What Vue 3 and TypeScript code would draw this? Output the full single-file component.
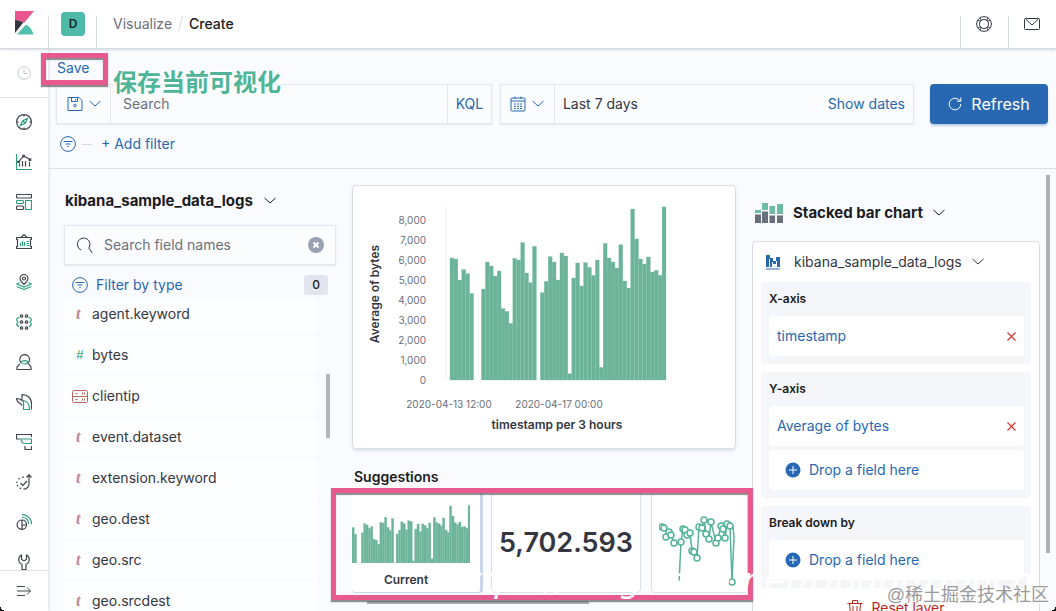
<script setup lang="ts">
interface Stroke { d: string; accent?: boolean }
interface NavItem { label: string; strokes: Stroke[] }
interface Field { name: string; kind: 'text' | 'number' | 'ip' }
interface Slot { text: string; filled: boolean }
interface Dimension { label: string; slots: Slot[] }

const navItems: NavItem[] = [
  { label: 'Discover', strokes: [
    { d: 'M8 .6a7.4 7.4 0 1 0 0 14.8A7.4 7.4 0 0 0 8 .6zM8 .6v2M8 13.4v2M.6 8h2M13.4 8h2' },
    { d: 'M11.5 4.5 9.2 9.2 4.5 11.5 6.8 6.8zM7 7l2 2', accent: true },
  ] },
  { label: 'Visualize', strokes: [
    { d: 'M.5 0v15.5H16', accent: true },
    { d: 'M3.5 12.5V9.5M6.5 12.5V7M9.5 12.5V7M13.5 12.5V8M3 7.3 7 2.8M8.5 2.5 13 5M1.8 7.3h1.5v1H1.8zM6.8 1.3h1.5v1.5H6.8zM13.2 4.8h1.5v1.5h-1.5z' },
  ] },
  { label: 'Dashboard', strokes: [
    { d: 'M1.5.5h13a1 1 0 0 1 1 1v1.5a1 1 0 0 1-1 1h-13a1 1 0 0 1-1-1V1.5a1 1 0 0 1 1-1zM1.5 12h5a1 1 0 0 1 1 1v1.5a1 1 0 0 1-1 1h-5a1 1 0 0 1-1-1V13a1 1 0 0 1 1-1z' },
    { d: 'M9.5 6.5h6v9h-6zM1.5 6.5h5a1 1 0 0 1 1 1v1a1 1 0 0 1-1 1h-5a1 1 0 0 1-1-1v-1a1 1 0 0 1 1-1z', accent: true },
  ] },
  { label: 'Canvas', strokes: [
    { d: 'M.5 3.5h15v2h-1v7h1v2H.5v-2h1v-7h-1zM5 3.5l3-3 3 3' },
    { d: 'M4.5 12V9M6.5 12V7M8.5 12V8M10.5 7.5H13M10.5 9.5H13M10.5 11.5H13', accent: true },
  ] },
  { label: 'Maps', strokes: [
    { d: 'M8 10.5C5.5 8 4 6.5 4 4.5a4 4 0 0 1 8 0c0 2-1.5 3.5-4 6zM8 3a1.5 1.5 0 1 0 0 3 1.5 1.5 0 0 0 0-3z' },
    { d: 'M3.5 8.5.7 10 8 13l7.3-3-2.8-1.5M.7 12.5 8 15.5l7.3-3', accent: true },
  ] },
  { label: 'Machine Learning', strokes: [
    { d: 'M3 3 .8 5v1.5L2 8 .8 9.5V11L3 13M13 3l2.2 2v1.5L14 8l1.2 1.500V11L13 13', accent: true },
    { d: 'M5.500.800a1.200 1.200 0 1 0 .1 0zM10.500.800a1.200 1.200 0 1 0 .1 0zM5.500 6.800a1.200 1.200 0 1 0 .1 0zM10.500 6.800a1.200 1.200 0 1 0 .1 0zM5.500 12.800a1.200 1.200 0 1 0 .1 0zM10.500 12.800a1.200 1.200 0 1 0 .1 0z' },
  ] },
  { label: 'Metrics', strokes: [
    { d: 'M5 9C3.5 7.5 3.5 4 5 2.2 7 0 10.5 0 12.5 2.5c1.5 2 1.3 5-.5 6.5l3 4v2.5H1V13l3-3' },
    { d: 'M5 8.5C6.5 6 11 6 12.2 8.5 10.5 10.5 6.5 10.5 5 8.5z', accent: true },
  ] },
  { label: 'Logs', strokes: [
    { d: 'M6 11.5C5 8.5.5 9 .5 4.5c2.5 0 4 .5 5.5 2V.6c5.5 0 9.5 3.4 9.5 9v6' },
    { d: 'M7.5 6.5v9h6c0-4-2-8-6-9z', accent: true },
  ] },
  { label: 'APM', strokes: [
    { d: 'M4 5H.5V.5h15V3M9 12v3.5h6.5V12' },
    { d: 'M5 5h10.5v4.5H9C6.5 9.5 5 8 5 5z', accent: true },
  ] },
  { label: 'Uptime', strokes: [
    { d: 'M13 1v9c0 3-2.5 5.2-5.5 5.2M10.5 3.5 13 .8l2.5 2.7M6 3.5l2-.5M2.5 5.2l1.2-1M.8 9l.2-1.5M5 14.7l-1.5-.8M2 12.5 1.2 11' },
    { d: 'M4.5 9 7 11.5 11 7' },
  ] },
  { label: 'SIEM', strokes: [
    { d: 'M6 6a4.7 4.7 0 1 0 4.5 5H6zM6 6v9.5M6 11h4.5C10.5 8 9 6 6 6' },
    { d: 'M6 .7c5.5 0 9.5 4 9.5 9.5M6 3.5c4 0 6.5 2.5 6.5 6.5', accent: true },
  ] },
  { label: 'Dev Tools', strokes: [
    { d: 'M6 15.5v-5C1.5 8.5 2 2.5 5.5 1v4l1.5 1.5h2L10.5 5V1c3.5 1.5 4 7.5-.5 9.5v5z' },
  ] },
]

const fields: Field[] = [
  { name: 'agent.keyword', kind: 'text' },
  { name: 'bytes', kind: 'number' },
  { name: 'clientip', kind: 'ip' },
  { name: 'event.dataset', kind: 'text' },
  { name: 'extension.keyword', kind: 'text' },
  { name: 'geo.dest', kind: 'text' },
  { name: 'geo.src', kind: 'text' },
  { name: 'geo.srcdest', kind: 'text' },
]

const dimensions: Dimension[] = [
  { label: 'X-axis', slots: [{ text: 'timestamp', filled: true }] },
  { label: 'Y-axis', slots: [{ text: 'Average of bytes', filled: true }, { text: 'Drop a field here', filled: false }] },
  { label: 'Break down by', slots: [{ text: 'Drop a field here', filled: false }] },
]

const values: number[] = [
  6100, 6050, 5000, 5517, 5317, 4333, 0, 0, 4550, 5900, 5700, 5200, 5450, 3567, 3433, 2833,
  6083, 6000, 6867, 5350, 4867, 6683, 0, 4367, 4933, 6167, 5900, 5000, 6350, 6200, 317, 5100,
  5850, 4700, 5867, 5633, 5233, 6000, 633, 6833, 6100, 5900, 5600, 6767, 4950, 4600, 8550,
  7050, 6050, 5800, 6150, 5400, 5483, 5233, 8650,
]
const ticks = [8000, 7000, 6000, 5000, 4000, 3000, 2000, 1000, 0]

const pitch = 216 / values.length
const bars = values.map((v, i) => ({ x: 97 + i * pitch, h: v / 50 }))
const miniBars = values.slice(4).map((v, i) => ({ x: i * 2.32, h: v / 150 }))

const points: [number, number][] = [
  [3, 14], [5, 15], [10, 19], [7, 24], [12, 22], [15, 30],
  [22, 29], [24, 16], [26, 17], [28, 22], [31, 20], [33, 38], [35, 39], [38, 45],
  [40, 14], [43, 15], [45, 7], [47, 21], [50, 26], [52, 9], [57, 30], [59, 25],
  [62, 13], [64, 16], [66, 25], [68, 11], [71, 13], [73, 69],
]
const firstLine = points.slice(0, 6).map(p => p.join(',')).join(' ')
const secondLine = '20,70 ' + points.slice(6).map(p => p.join(',')).join(' ') + ' 75,24 74,14'
</script>

<template>
  <div class="app">
    <header class="header">
      <a href="#" class="logo" aria-label="Kibana home">
        <svg width="19" height="24" viewBox="0 0 19 24">
          <path d="M0 0h19L9 12C6.500 10 3.500 9 0 9z" fill="#e8558f" />
          <path d="M0 9c3.500 0 6 1 8.300 2.500L0 22z" fill="#343741" />
          <path d="M11 13.500c4 2.500 6.500 5.500 7.500 10H2z" fill="#4dbfaa" />
        </svg>
      </a>
      <div class="space"><button class="space-badge" aria-label="Default space">D</button></div>
      <nav class="crumbs" aria-label="Breadcrumb">
        <a href="#">Visualize</a><span class="slash" aria-hidden="true"></span><strong>Create</strong>
      </nav>
      <button class="header-btn" aria-label="Help">
        <svg width="16" height="16" viewBox="0 0 16 16" class="line">
          <circle cx="8" cy="8" r="7.400" /><circle cx="8" cy="8" r="4.500" />
          <path d="M2.200 4.200 5 5.500M4.200 2.200 5.500 5M11.800 2.200 10.500 5M13.800 4.200 11 5.500M2.200 11.800 5 10.500M4.200 13.800 5.500 11M11.800 13.800 10.500 11M13.800 11.800 11 10.500" />
        </svg>
      </button>
      <button class="header-btn" aria-label="News">
        <svg width="16" height="16" viewBox="0 0 16 16" class="line">
          <rect x=".5" y="2.500" width="15" height="11" rx="1" /><path d="m1.500 3 6.500 6L14.500 3" />
        </svg>
      </button>
    </header>

    <div class="shell">
      <nav class="sidebar" aria-label="Primary">
        <a href="#" class="recent" aria-label="Recently viewed">
          <svg width="14" height="14" viewBox="0 0 14 14" class="faint"><circle cx="7" cy="7" r="6.300" /><path d="M7 3v4.500h4" /></svg>
        </a>
        <div class="nav-list">
          <a v-for="item in navItems" :key="item.label" href="#" class="nav-link" :aria-label="item.label">
            <svg width="16" height="16" viewBox="0 0 16 16" class="line">
              <path v-for="(s, i) in item.strokes" :key="i" :d="s.d" :class="{ accent: s.accent }" />
            </svg>
          </a>
        </div>
        <button class="collapse" aria-label="Expand navigation">
          <svg width="16" height="12" viewBox="0 0 16 12" class="line"><path d="M1 1.500h8M1 6h13.500M1 10.500h8M11 2.500 14.500 6 11 9.500" /></svg>
        </button>
      </nav>

      <main class="main">
        <section class="top">
          <div class="menu"><a href="#">Save</a></div>
          <div class="query-row">
            <div class="query box">
              <button class="icon-pair" aria-label="Saved queries">
                <svg width="16" height="16" viewBox="0 0 16 16" class="line"><path d="M1 1.500h11l3 3v10H1zM4.500 1.500v4h6v-4M8.500 3v1.500" /><circle cx="8" cy="9.500" r="1.300" /></svg>
                <svg width="12" height="8" viewBox="0 0 12 8" class="line"><path d="m.500 1 5.500 5 5.500-5" /></svg>
              </button>
              <input type="text" placeholder="Search" aria-label="Search" class="query-input">
              <button class="kql">KQL</button>
            </div>
            <div class="dates box">
              <button class="icon-pair" aria-label="Quick date select">
                <svg width="16" height="16" viewBox="0 0 16 16" class="line">
                  <path d="M2 2h12a1 1 0 0 1 1 1v11a1 1 0 0 1-1 1H2a1 1 0 0 1-1-1V3a1 1 0 0 1 1-1zM1 5h14M5 .500V3M11 .500V3" />
                  <path d="M4 8h9M4 10.300h9M4 12.600h9" stroke-dasharray="2 1" />
                </svg>
                <svg width="12" height="8" viewBox="0 0 12 8" class="line"><path d="m.500 1 5.500 5 5.500-5" /></svg>
              </button>
              <span class="range">Last 7 days</span>
              <button class="show-dates">Show dates</button>
            </div>
            <button class="refresh">
              <svg width="14" height="14" viewBox="0 0 14 14" class="line"><path d="M12.800 7a5.800 5.800 0 1 1-2.300-4.600L12.500 4M12.800.500V4.200H9" /></svg>
              Refresh
            </button>
          </div>
          <div class="filters">
            <button aria-label="Filter options" class="plain">
              <svg width="16" height="16" viewBox="0 0 16 16" class="line"><circle cx="8" cy="8" r="7.400" /><path d="M3.500 5.500h9M5.500 8h5M7.300 10.500h1.400" /></svg>
            </button>
            <span class="dash"></span>
            <button class="plain">+ Add filter</button>
          </div>
          <div class="mark save-mark" aria-hidden="true"></div>
          <p class="save-note">保存当前可视化</p>
        </section>

        <div class="work">
          <section class="fields">
            <button class="title">
              kibana_sample_data_logs
              <svg width="12" height="8" viewBox="0 0 12 8" class="line"><path d="m.500 1 5.500 5 5.500-5" /></svg>
            </button>
            <div class="field-search box">
              <svg width="17" height="17" viewBox="0 0 17 17" class="line"><path d="M5 13A6.300 6.300 0 1 1 12.800 11L16.300 16" /></svg>
              <input type="text" placeholder="Search field names" aria-label="Search field names">
              <button class="clear" aria-label="Clear">
                <svg width="16" height="16" viewBox="0 0 16 16"><circle cx="8" cy="8" r="8" /><path d="m5.500 5.500 5 5M10.500 5.500l-5 5" /></svg>
              </button>
            </div>
            <button class="type-filter">
              <svg width="16" height="16" viewBox="0 0 16 16" class="line"><circle cx="8" cy="8" r="7.400" /><path d="M3.500 5.500h9M5.500 8h5M7.300 10.500h1.400" /></svg>
              <span>Filter by type</span>
              <span class="count">0</span>
            </button>
            <div class="list-wrap">
              <ul class="list">
                <li v-for="f in fields" :key="f.name">
                  <span class="kind" :class="f.kind">
                    <svg v-if="f.kind === 'ip'" width="16" height="13" viewBox="0 0 16 13" class="line">
                      <path d="M1.500.500h13a1 1 0 0 1 1 1v10a1 1 0 0 1-1 1h-13a1 1 0 0 1-1-1v-10a1 1 0 0 1 1-1zM.500 6.500h15M10.500 2.500v2M12.500 2.500v2M10.500 8.500v2M12.500 8.500v2M3.500 3.500h2M3.500 9.500h2" />
                    </svg>
                    <template v-else>{{ f.kind === 'text' ? 't' : '#' }}</template>
                  </span>
                  {{ f.name }}
                </li>
              </ul>
              <span class="list-thumb"></span>
            </div>
          </section>

          <section class="canvas">
            <div class="chart-card">
              <svg class="chart" viewBox="0 0 382 262" role="img" aria-label="Average of bytes by timestamp">
                <line x1="93" x2="93" y1="21" y2="194" class="axis" />
                <text v-for="t in ticks" :key="t" x="73" :y="198 - t / 50" text-anchor="end" class="tick">{{ t.toLocaleString('en-US') }}</text>
                <rect v-for="(b, i) in bars" :key="i" :x="b.x" :y="194 - b.h" :width="pitch" :height="b.h" class="bar" />
                <text x="96" y="222" text-anchor="middle" class="tick">2020-04-13 12:00</text>
                <text x="206" y="222" text-anchor="middle" class="tick">2020-04-17 00:00</text>
                <text x="204" y="243" text-anchor="middle" class="axis-title">timestamp per 3 hours</text>
                <text transform="translate(26 108) rotate(-90)" text-anchor="middle" class="axis-title">Average of bytes</text>
              </svg>
            </div>
            <h2>Suggestions</h2>
            <div class="suggestions">
              <button class="card current">
                <svg width="118" height="58" viewBox="0 0 118 58">
                  <rect v-for="(b, i) in miniBars" :key="i" :x="b.x" :y="58 - b.h" width="2.320" :height="b.h" class="bar" />
                </svg>
                <span>Current</span>
              </button>
              <button class="card metric">5,702.593</button>
              <button class="card trend" aria-label="Line chart">
                <svg width="80" height="74" viewBox="0 0 80 74">
                  <polyline :points="firstLine" /><polyline :points="secondLine" />
                  <circle v-for="(p, i) in points" :key="i" :cx="p[0]" :cy="p[1]" r="3" />
                </svg>
              </button>
              <div class="mark suggest-mark" aria-hidden="true"></div>
            </div>
            <span class="h-thumb"></span>
          </section>

          <section class="config">
            <button class="chart-type">
              <svg width="28" height="20" viewBox="0 0 28 20">
                <path d="M0 7h6v3H0zM7 0h6v7H7zM14.500 3h5.500v8h-5.500zM22 1h6v10h-6z" fill="#6dbba0" />
                <path d="M0 11.500h6V20H0zM7 8.500h6V20H7zM14.500 12.500h5.500V20h-5.500zM22 12.500h6V20h-6z" fill="#69707d" />
              </svg>
              <span>Stacked bar chart</span>
              <svg width="12" height="8" viewBox="0 0 12 8" class="line"><path d="m.500 1 5.500 5 5.500-5" /></svg>
            </button>
            <div class="layer">
              <button class="layer-head">
                <svg width="16" height="16" viewBox="0 0 16 16"><path d="M1 1h4v3h3v3h3V3h4v10h-3V7h-1v3H8V8H7v5H5V5H4v8H1zM1 14.500h14v1H1z" fill="#2868b2" /></svg>
                <span>kibana_sample_data_logs</span>
                <svg width="12" height="8" viewBox="0 0 12 8" class="line"><path d="m.500 1 5.500 5 5.500-5" /></svg>
              </button>
              <div v-for="d in dimensions" :key="d.label" class="dimension">
                <h3>{{ d.label }}</h3>
                <div v-for="s in d.slots" :key="s.text" class="slot">
                  <button v-if="s.filled" class="plain">{{ s.text }}</button>
                  <button v-else class="plain drop">
                    <svg width="16" height="16" viewBox="0 0 16 16"><circle cx="8" cy="8" r="7.500" fill="#2868b2" /><path d="M8 4v8M4 8h8" stroke="#fff" /></svg>
                    {{ s.text }}
                  </button>
                  <button v-if="s.filled" class="remove" :aria-label="`Remove ${s.text}`">
                    <svg width="9" height="9" viewBox="0 0 9 9"><path d="M.5.5l8 8M8.500.5l-8 8" /></svg>
                  </button>
                </div>
              </div>
              <button class="reset">
                <svg width="16" height="16" viewBox="0 0 16 16" class="line"><path d="M.500 3.500h15M5.500 3.500v-3h5v3M2.500 3.500l1 12h9l1-12M6 6v7M10 6v7" /></svg>
                Reset layer
              </button>
            </div>
            <span class="v-thumb"></span>
          </section>
        </div>
      </main>
    </div>

    <span class="url-mark">https://blog.csdn.net/UbuntuTouch</span>
    <span class="source-mark">@稀土掘金技术社区</span>
    <span class="corner left"></span><span class="corner right"></span>
  </div>
</template>

<style>
body { margin: 0; }
</style>

<style scoped>
* { box-sizing: border-box; }
.app {
  position: relative; display: flex; flex-direction: column; height: 100vh; overflow: hidden;
  background: #fafbfe; color: #343741;
  font: 14px/20px Inter, "Noto Sans CJK SC", sans-serif;
}
button, input { font: inherit; color: inherit; background: none; border: 0; padding: 0; margin: 0; }
button { cursor: pointer; }
input { min-width: 0; outline: 0; }
input::placeholder { color: #69707d; opacity: 1; }
a { color: #2868b2; text-decoration: none; }
svg { flex: none; display: block; }
.line { fill: none; stroke: currentColor; stroke-width: 1; }
.faint { fill: none; stroke: #c2c6cd; }
.accent { stroke: #2f9d80; }
.box { border: 1px solid #e3e6ec; box-shadow: 0 1px 2px #98a2b333; background: #fbfcfd; }
.plain { color: #2868b2; }

.header {
  position: relative; z-index: 2; flex: none; display: flex; align-items: flex-end; height: 49px;
  background: #fff; border-bottom: 1px solid #d5dae2; box-shadow: 0 1px 2px #98a2b366;
}
.logo { width: 48px; height: 37px; padding-left: 15px; }
.space { width: 49px; height: 32px; border: solid #d9dde4; border-width: 0 1px; }
.space-badge { display: block; width: 24px; height: 24px; margin: -4px 0 0 12px; border-radius: 4px; background: #4dbba8; color: #1a1c21; font-size: 12px; font-weight: 600; }
.crumbs { flex: 1; display: flex; align-items: center; height: 48px; padding-left: 16px; }
.crumbs a { color: #69707d; }
.crumbs strong { font-weight: 500; color: #1a1c21; }
.slash { width: 1px; height: 16px; margin: 0 8px; background: #d3dae6; transform: rotate(15deg); }
.header-btn { width: 48px; height: 32px; padding: 0 0 16px 15px; border-left: 1px solid #d9dde4; }

.shell { flex: 1; display: flex; min-height: 0; }
.sidebar { position: relative; z-index: 1; flex: none; display: flex; flex-direction: column; width: 48px; background: #fff; box-shadow: 1px 0 3px #98a2b34d; }
.recent { flex: none; display: flex; align-items: center; justify-content: center; height: 49px; border-bottom: 1px solid #e0e3e9; }
.nav-list { flex: 1; min-height: 0; overflow: hidden; padding-top: 4px; }
.nav-link { display: flex; align-items: center; justify-content: center; height: 40px; color: #43464f; }
.nav-link svg { stroke-width: 1.2; }
.collapse { flex: none; display: flex; align-items: center; justify-content: center; height: 41px; border-top: 1px solid #e0e3e9; background: #fff; color: #43464f; }

.main { flex: 1; min-width: 0; display: flex; flex-direction: column; }
.top { position: relative; z-index: 2; flex: none; padding: 9px 8px 14px; border-bottom: 1px solid #dce0e7; }
.menu { padding-left: 1px; height: 26px; }
.query-row { display: flex; }
.query { flex: 436 1 0; display: flex; height: 40px; }
.dates { flex: 414 1 0; display: flex; align-items: center; height: 40px; margin-left: 8px; }
.icon-pair { flex: none; display: flex; align-items: center; justify-content: center; gap: 6px; width: 54px; height: 38px; border-right: 1px solid #e3e6ec; color: #2868b2; }
.query-input { flex: 1; padding-left: 12px; }
.kql { width: 44px; border-left: 1px solid #e3e6ec; color: #2868b2; }
.range { flex: 1; padding-left: 8px; }
.show-dates { padding-right: 8px; color: #2868b2; }
.refresh { display: flex; align-items: center; justify-content: center; gap: 9px; width: 118px; height: 40px; margin-left: 16px; border-radius: 4px; background: #2868b2; color: #fff; font-size: 16px; box-shadow: 0 2px 2px #2868b24d; }
.filters { display: flex; align-items: center; padding: 10px 4px 0; }
.dash { width: 10px; height: 1px; margin: 0 9px 0 6px; background: #d3dae6; }
.mark { position: absolute; pointer-events: none; border: 5px solid #e65a8d; box-shadow: 0 2px 1px #555a, inset 0 2px 1px #555a; }
.save-mark { left: -7px; top: 4px; width: 67px; height: 32px; }
.save-note { position: absolute; left: 65px; top: 14px; margin: 0; font: bold 24px/36px "Noto Sans CJK SC", sans-serif; color: #4fb598; text-shadow: -2px 0 1px #fff, 2px 0 1px #fff, 0 2px 1px #fff, 0 -2px 1px #fff; }

.work { flex: 1; min-height: 0; display: grid; grid-template: minmax(0, 1fr) / minmax(0, 304fr) minmax(0, 384fr) minmax(0, 320fr); }
.fields { display: flex; flex-direction: column; min-height: 0; padding: 20px 16px 0; }
.title { flex: none; display: flex; align-items: center; gap: 11px; height: 24px; padding-left: 1px; font-size: 15px; font-weight: 700; color: #1a1c21; }
.field-search { flex: none; display: flex; align-items: center; gap: 11px; height: 40px; margin-top: 12px; padding: 0 11px; }
.field-search input { flex: 1; }
.clear circle { fill: #98a2b3; }
.clear path { stroke: #fff; stroke-width: 2; }
.type-filter { flex: none; display: flex; align-items: center; gap: 8px; height: 28px; margin-top: 6px; padding: 0 8px; color: #2868b2; }
.count { width: 24px; margin-left: auto; border-radius: 3px; background: #e0e5ee; color: #1a1c21; font-size: 12px; font-weight: 500; }
.list-wrap { display: flex; min-height: 0; overflow: hidden; }
.list { flex: 1; list-style: none; margin: 0; padding: 0; }
.list li { display: flex; align-items: center; height: 38px; margin-bottom: 3px; padding-left: 8px; background: #fdfeff; }
.list li:first-child { height: 34px; padding-bottom: 4px; }
.kind { width: 20px; padding-left: 4px; font: italic bold 16px/20px "Liberation Serif", serif; color: #c08497; }
.kind.number { color: #54b399; font-family: "Liberation Sans", sans-serif; font-size: 13px; }
.kind.ip { padding: 0; color: #b9675b; }
.list-thumb { width: 4px; height: 64px; margin: 75px 6px 0 9px; background: #b3b5b9; }

.canvas { position: relative; z-index: 1; padding-top: 16px; }
.chart-card { border: 1px solid #d9dde5; border-radius: 4px; background: #fff; box-shadow: 0 2px 3px #98a2b340; }
.chart { width: 100%; }
.bar { fill: #6db39a; stroke: #7fc2ab; stroke-width: 0.3; }
.axis { stroke: #eef0f3; }
.tick { font-size: 10px; fill: #69707d; }
.axis-title { font-size: 12px; font-weight: 600; fill: #343741; }
h2 { margin: 18px 0 0 2px; font-size: 14px; line-height: 20px; font-weight: 600; color: #1a1c21; }
.suggestions { position: relative; display: flex; gap: 8px; height: 108px; padding-top: 4px; }
.card { flex: none; height: 102px; border: 1px solid #dce0e7; border-radius: 4px; background: #fff; }
.current { display: flex; flex-direction: column; align-items: flex-start; justify-content: flex-start; width: 131px; padding-top: 14px; border-color: transparent #c8d6eb #c8d6eb transparent; border-width: 0 3px 1px 0; font-size: 12px; font-weight: 600; }
.current span { width: 108px; margin-top: 7px; }
.metric { width: 150px; padding-top: 2px; font-size: 27px; font-weight: 600; }
.trend { width: 97px; margin-left: 2px; padding: 15px 0 0 7px; }
.trend polyline { fill: none; stroke: #54b399; stroke-width: 1.5; }
.trend circle { fill: #fff; stroke: #54b399; stroke-width: 1.5; }
.suggest-mark { inset: 1px -17px -5px -21px; }
.h-thumb { display: block; width: 222px; height: 3px; margin: 6px 0 0 15px; background: #a9abb0; }

.config { position: relative; min-height: 0; padding: 32px 16px 0; }
.chart-type { display: flex; align-items: center; gap: 10px; height: 24px; padding-left: 3px; font-size: 15px; font-weight: 700; color: #1a1c21; }
.layer { display: flex; flex-direction: column; gap: 8px; margin-top: 16px; padding: 8px; border: 1px solid #d9dde5; border-radius: 4px; background: #fff; }
.layer-head { display: flex; align-items: center; height: 24px; padding-left: 4px; }
.layer-head span { margin: 0 10px 0 13px; }
.dimension { flex: none; padding: 8px 7px 8px 8px; border-radius: 4px; background: #f5f6fa; }
h3 { margin: 0 0 8px; font-size: 12px; line-height: 18px; font-weight: 600; color: #1a1c21; }
.slot { display: flex; align-items: center; justify-content: space-between; height: 40px; padding: 0 8px; border-radius: 4px; background: #fff; }
.slot + .slot { margin-top: 4px; }
.drop { display: flex; align-items: center; gap: 8px; padding-left: 8px; }
.remove path { stroke: #cc3d33; stroke-width: 1.2; }
.reset { display: flex; align-items: center; justify-content: center; gap: 8px; height: 24px; color: #bd271e; }
.v-thumb { position: absolute; right: 6px; top: 6px; width: 4px; height: 378px; background: #adafb3; }

.url-mark { position: absolute; z-index: 3; left: 446px; bottom: 11px; pointer-events: none; white-space: nowrap; font: italic 34px/40px "DejaVu Sans", sans-serif; color: #fff; }
.source-mark { position: absolute; z-index: 4; right: 7px; bottom: 4px; pointer-events: none; font: 18px/24px "Liberation Sans", "Noto Sans CJK SC", sans-serif; color: #9a9a9a; text-shadow: 1px 1px 0 #fff; }
.corner { position: absolute; z-index: 5; bottom: 0; width: 6px; height: 6px; }
.left { left: 0; background: radial-gradient(circle at 100% 0, transparent 6px, #111 6px); }
.right { right: 0; background: radial-gradient(circle at 0 0, transparent 6px, #111 6px); }
</style>
